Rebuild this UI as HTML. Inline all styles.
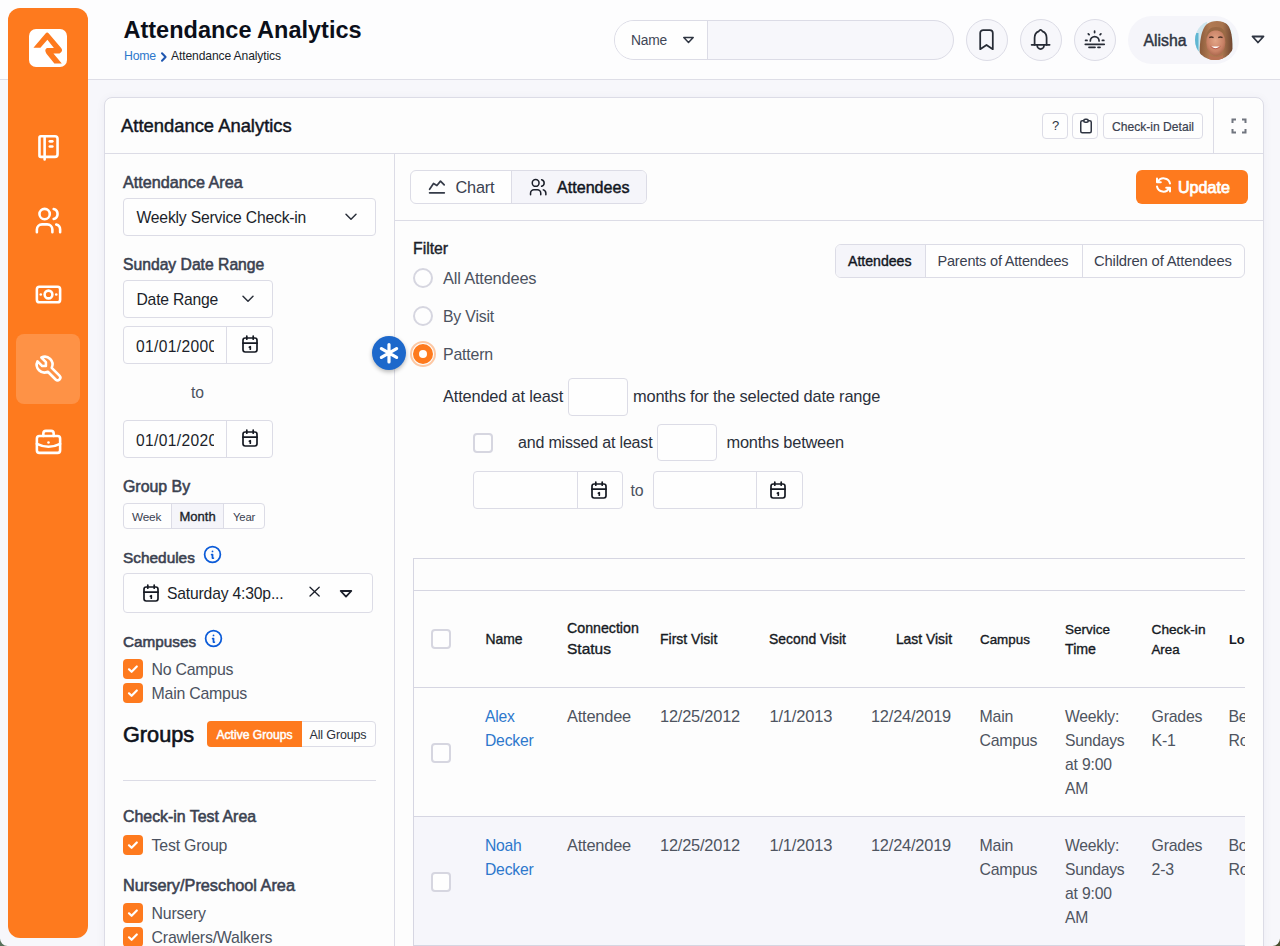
<!DOCTYPE html>
<html><head><meta charset="utf-8"><title>Attendance Analytics</title>
<style>
html,body{margin:0;padding:0;}
body{width:1280px;height:946px;overflow:hidden;position:relative;background:#f7f7fb;font-family:"Liberation Sans",sans-serif;}
.a{position:absolute;box-sizing:border-box;}
.t{white-space:nowrap;}
svg.a{overflow:visible;}
</style></head><body>
<div class="a" style="left:0px;top:0px;width:1280px;height:79px;background:#fdfdfe;"></div>
<div class="a" style="left:0px;top:79px;width:1280px;height:1px;background:#dedee7;"></div>
<div class="a" style="left:8px;top:8px;width:80px;height:930px;background:#fe7a1e;border-radius:12px;"></div>
<div class="a" style="left:29px;top:29px;width:38px;height:38px;background:#fff;border-radius:7px;"></div>
<svg class="a" style="left:26px;top:26px;" width="44" height="44" viewBox="0 0 946 946" fill="none"><path fill="#fe7a1e" d="M160 465 L420 160 Q455 118 490 160 L760 478 Q805 540 720 590 L590 590 L770 805 L610 805 L440 595 Q385 515 450 475 L600 475 L460 295 L310 465 Z"/></svg>
<div class="a" style="left:16px;top:334px;width:64px;height:70px;background:rgba(255,255,255,0.18);border-radius:8px;"></div>
<svg class="a" style="left:32.5px;top:131.2px;" width="31" height="31" viewBox="0 0 24 24" fill="none"><g stroke="#fff" stroke-width="2" stroke-linecap="round" stroke-linejoin="round"><path d="M6 4h11a2 2 0 0 1 2 2v12a2 2 0 0 1 -2 2h-11a1 1 0 0 1 -1 -1v-14a1 1 0 0 1 1 -1m3 0v18"/><path d="M13 8l2 0"/><path d="M13 12l2 0"/></g></svg>
<svg class="a" style="left:32.5px;top:205.4px;" width="31" height="31" viewBox="0 0 24 24" fill="none"><g stroke="#fff" stroke-width="2" stroke-linecap="round" stroke-linejoin="round"><path d="M9 7m-4 0a4 4 0 1 0 8 0a4 4 0 1 0 -8 0"/><path d="M3 21v-2a4 4 0 0 1 4 -4h4a4 4 0 0 1 4 4v2"/><path d="M16 3.13a4 4 0 0 1 0 7.75"/><path d="M21 21v-2a4 4 0 0 0 -3 -3.85"/></g></svg>
<svg class="a" style="left:32.5px;top:279.3px;" width="31" height="31" viewBox="0 0 24 24" fill="none"><g stroke="#fff" stroke-width="2" stroke-linecap="round" stroke-linejoin="round"><path d="M12 12m-3 0a3 3 0 1 0 6 0a3 3 0 1 0 -6 0"/><path d="M3 6m0 2a2 2 0 0 1 2 -2h14a2 2 0 0 1 2 2v8a2 2 0 0 1 -2 2h-14a2 2 0 0 1 -2 -2z"/><path d="M18 12l.01 0"/><path d="M6 12l.01 0"/></g></svg>
<svg class="a" style="left:32.5px;top:353.2px;" width="31" height="31" viewBox="0 0 24 24" fill="none"><g stroke="#fff" stroke-width="2" stroke-linecap="round" stroke-linejoin="round"><path d="M7 10h3v-3l-3.5 -3.5a6 6 0 0 1 8 8l6 6a2 2 0 0 1 -3 3l-6 -6a6 6 0 0 1 -8 -8l3.5 3.5"/></g></svg>
<svg class="a" style="left:32.5px;top:427.4px;" width="31" height="31" viewBox="0 0 24 24" fill="none"><g stroke="#fff" stroke-width="2" stroke-linecap="round" stroke-linejoin="round"><path d="M3 7m0 2a2 2 0 0 1 2 -2h14a2 2 0 0 1 2 2v9a2 2 0 0 1 -2 2h-14a2 2 0 0 1 -2 -2z"/><path d="M8 7v-2a2 2 0 0 1 2 -2h4a2 2 0 0 1 2 2v2"/><path d="M12 12l0 .01"/><path d="M3 13a20 20 0 0 0 18 0"/></g></svg>
<div class="a t" style="top:19px;font-size:23.5px;line-height:23.5px;color:#0b0f19;font-weight:700;left:123.5px;">Attendance Analytics</div>
<div class="a t" style="top:50px;font-size:12.3px;line-height:12.3px;color:#2d78cc;letter-spacing:-0.200px;left:124px;">Home</div>
<svg class="a" style="left:160px;top:51.5px;" width="8" height="10" viewBox="0 0 8 10" fill="none"><path d="M2 1.2l3.6 3.8l-3.6 3.8" stroke="#1e56b0" stroke-width="2" stroke-linecap="round" stroke-linejoin="round"/></svg>
<div class="a t" style="top:50px;font-size:12.1px;line-height:12.1px;color:#1b1f2a;letter-spacing:-0.116px;left:171px;">Attendance Analytics</div>
<div class="a" style="left:614px;top:20px;width:340px;height:40px;border:1px solid #dcdce6;border-radius:20px;background:#f7f7fb;overflow:hidden;"><div style="position:absolute;left:0;top:0;width:92px;height:38px;background:#fefefe;border-right:1px solid #dcdce6;"></div></div>
<div class="a t" style="top:34px;font-size:13.8px;line-height:13.8px;color:#3f4656;letter-spacing:-0.200px;left:631px;">Name</div>
<svg class="a" style="left:682px;top:36px;" width="13" height="8" viewBox="0 0 13 8" fill="none"><path d="M1.8 1.5h9.4l-4.7 5z" stroke="#2f3542" stroke-width="1.5" stroke-linejoin="round"/></svg>
<div class="a" style="left:966px;top:19px;width:42px;height:42px;border:1px solid #dcdce6;border-radius:50%;background:#f7f7fb;"></div>
<div class="a" style="left:1020px;top:19px;width:42px;height:42px;border:1px solid #dcdce6;border-radius:50%;background:#f7f7fb;"></div>
<div class="a" style="left:1074px;top:19px;width:42px;height:42px;border:1px solid #dcdce6;border-radius:50%;background:#f7f7fb;"></div>
<svg class="a" style="left:972px;top:24px;" width="30" height="32" viewBox="0 0 30 32" fill="none"><path d="M8.2 25.2V9.1a3 3 0 0 1 3-3h6.6a3 3 0 0 1 3 3V25.2L14.5 21z" stroke="#262b35" stroke-width="1.75" stroke-linejoin="round"/></svg>
<svg class="a" style="left:1026px;top:24px;" width="30" height="32" viewBox="0 0 30 32" fill="none"><g stroke="#262b35" stroke-width="1.75" stroke-linecap="round" stroke-linejoin="round"><path d="M5.6 20.8H23.6"/><path d="M8.6 20.8V13.8C8.6 10.4 10.3 8.3 12.7 7.4Q14.6 4.3 16.5 7.4C18.9 8.3 20.6 10.4 20.6 13.8V20.8"/><path d="M11.2 21.6a3.4 3.4 0 0 0 6.8 0"/></g></svg>
<svg class="a" style="left:1080px;top:24px;" width="30" height="32" viewBox="0 0 30 32" fill="none"><g stroke="#262b35" stroke-width="1.75" stroke-linecap="round"><path d="M5.3 20.3H24.2"/><path d="M9 23.3H15M18 23.3H20"/><path d="M10.3 16.9a4.4 4.4 0 0 1 8.8 0"/><path d="M14.6 7.2v1.4M8.3 9.9l.8.8M20.9 9.9l-.8.8M5.6 16.4h1.4M22.4 16.4h1.4"/></g></svg>
<div class="a" style="left:1128px;top:16px;width:111px;height:48px;background:#f5f5fa;border-radius:24px;"></div>
<div class="a t" style="top:33px;font-size:15.8px;line-height:15.8px;color:#2f3542;left:1143.5px;-webkit-text-stroke:0.45px #2f3542;">Alisha</div>
<svg class="a" style="left:1195px;top:20px;" width="40" height="40" viewBox="0 0 40 40" fill="none"><defs><clipPath id="av"><circle cx="20" cy="20" r="20"/></clipPath>
<radialGradient id="fg" cx="0.48" cy="0.42" r="0.6"><stop offset="0" stop-color="#e3a587"/><stop offset="0.7" stop-color="#c98266"/><stop offset="1" stop-color="#a8664c"/></radialGradient>
<linearGradient id="hg" x1="0" y1="0" x2="1" y2="0"><stop offset="0" stop-color="#8a5a3a"/><stop offset="0.3" stop-color="#b07a52"/><stop offset="0.7" stop-color="#a8744e"/><stop offset="1" stop-color="#6e4530"/></linearGradient></defs>
<g clip-path="url(#av)"><rect width="40" height="40" fill="#eef6f9"/><rect x="0" y="0" width="12" height="40" fill="#cfe6ee"/><rect x="0" y="13" width="3.5" height="18" fill="#5fb6d2"/>
<path d="M5 40 C4 28 5 10 12 4 C17 0 27 0 32 4 C38 10 38 26 37 40 Z" fill="url(#hg)"/>
<ellipse cx="20.8" cy="22.5" rx="9.6" ry="13.2" fill="url(#fg)"/>
<path d="M11 18 C11.5 10 16 7 21 7 C27 7 30.5 10 31 18 C29 12.5 25 10.5 21 10.5 C16 10.5 13 13 11 18Z" fill="#9a6a45"/>
<path d="M14.8 17.4q1.6-0.9 3.2 0M23.8 17.4q1.6-0.9 3.2 0" stroke="#4a2f25" stroke-width="1.4" fill="none" stroke-linecap="round"/>
<path d="M16 26.5q4.5 3.6 9 0z" fill="#fff"/><path d="M15.5 26.3q5 5 10 0" stroke="#b85a4f" stroke-width="0.9" fill="none"/>
<path d="M14 35 q7 4 14 0 v6 h-14z" fill="#b97255"/></g></svg>
<svg class="a" style="left:1251px;top:35px;" width="14" height="9" viewBox="0 0 14 9" fill="none"><path d="M1.5 1.5h11l-5.5 6z" stroke="#2f3542" stroke-width="1.8" stroke-linejoin="round"/></svg>
<div class="a" style="left:104px;top:97px;width:1160px;height:903px;background:#fdfdfd;border:1px solid #dcdce6;border-radius:8px;box-shadow:0 1px 10px rgba(40,40,90,0.05);"></div>
<div class="a" style="left:104px;top:153px;width:1160px;height:1px;background:#dcdce6;"></div>
<div class="a t" style="top:117px;font-size:18.4px;line-height:18.4px;color:#12161f;left:121px;-webkit-text-stroke:0.45px #12161f;">Attendance Analytics</div>
<div class="a" style="left:1042px;top:113px;width:26px;height:26px;border:1px solid #dcdce6;border-radius:4px;background:#fefefe;"></div>
<div class="a" style="left:1072px;top:113px;width:26px;height:26px;border:1px solid #dcdce6;border-radius:4px;background:#fefefe;"></div>
<div class="a" style="left:1103px;top:113px;width:100px;height:26px;border:1px solid #dcdce6;border-radius:4px;background:#fefefe;"></div>
<div class="a t" style="top:119px;font-size:13px;line-height:13px;color:#2f3542;left:1052px;">?</div>
<svg class="a" style="left:1077px;top:117px;" width="18" height="18" viewBox="0 0 24 24" fill="none"><g stroke="#2f3542" stroke-width="2" stroke-linecap="round" stroke-linejoin="round"><path d="M9 5h-2a2 2 0 0 0 -2 2v12a2 2 0 0 0 2 2h10a2 2 0 0 0 2 -2v-12a2 2 0 0 0 -2 -2h-2"/><path d="M9 3m0 2a2 2 0 0 1 2 -2h2a2 2 0 0 1 2 2v0a2 2 0 0 1 -2 2h-2a2 2 0 0 1 -2 -2z"/></g></svg>
<div class="a t" style="top:121px;font-size:12.1px;line-height:12.1px;color:#3a4150;left:1112px;-webkit-text-stroke:0.2px #3a4150;">Check-in Detail</div>
<div class="a" style="left:1213px;top:97px;width:1px;height:56px;background:#dcdce6;"></div>
<svg class="a" style="left:1231px;top:118px;" width="16" height="16" viewBox="0 0 16 16" fill="none"><path d="M1.5 5v-3.5h3.5M11 1.5h3.5v3.5M14.5 11v3.5h-3.5M5 14.5h-3.5v-3.5" stroke="#70757f" stroke-width="2"/></svg>
<div class="a" style="left:394px;top:153px;width:1px;height:847px;background:#dcdce6;"></div>
<div class="a t" style="top:174px;font-size:16.2px;line-height:16.2px;color:#3a4150;left:123px;-webkit-text-stroke:0.55px #3a4150;">Attendance Area</div>
<div class="a" style="left:123px;top:198px;width:253px;height:38px;border:1px solid #dcdce6;border-radius:4px;background:#fefefe;"></div>
<div class="a t" style="top:210px;font-size:15.7px;line-height:15.7px;color:#1b1f2a;letter-spacing:-0.193px;left:136.5px;">Weekly Service Check-in</div>
<svg class="a" style="left:345px;top:213px;" width="12" height="8" viewBox="0 0 12 8" fill="none"><path d="M1 1.2l5 5l5-5" stroke="#2b303b" stroke-width="1.5" stroke-linecap="round" stroke-linejoin="round"/></svg>
<div class="a t" style="top:257px;font-size:15.7px;line-height:15.7px;color:#3a4150;left:123px;-webkit-text-stroke:0.55px #3a4150;">Sunday Date Range</div>
<div class="a" style="left:123px;top:280px;width:150px;height:38px;border:1px solid #dcdce6;border-radius:4px;background:#fefefe;"></div>
<div class="a t" style="top:292px;font-size:15.7px;line-height:15.7px;color:#1b1f2a;letter-spacing:-0.213px;left:136.5px;">Date Range</div>
<svg class="a" style="left:242px;top:295px;" width="12" height="8" viewBox="0 0 12 8" fill="none"><path d="M1 1.2l5 5l5-5" stroke="#2b303b" stroke-width="1.5" stroke-linecap="round" stroke-linejoin="round"/></svg>
<div class="a" style="left:123px;top:326px;width:150px;height:38px;border:1px solid #dcdce6;border-radius:4px;background:#fefefe;"></div>
<div class="a" style="left:226px;top:326px;width:1px;height:38px;background:#dcdce6;"></div>
<div class="a" style="left:136px;top:334px;width:78px;height:24px;overflow:hidden;"><div class="t" style="position:absolute;left:0;top:5px;font-size:15.6px;line-height:15.6px;color:#1b1f2a;letter-spacing:0.35px;">01/01/2000</div></div>
<svg class="a" style="left:242px;top:335px;" width="16" height="18" viewBox="0 0 16 18" fill="none"><g stroke="#151922" stroke-width="1.7" stroke-linecap="round" stroke-linejoin="round"><rect x="1" y="3" width="14" height="14" rx="2.2"/><path d="M1 8.2h14M4.8 1v3.2M11.2 1v3.2M7.4 12.2l.9-.6v2.6"/></g></svg>
<div class="a" style="left:123px;top:420px;width:150px;height:38px;border:1px solid #dcdce6;border-radius:4px;background:#fefefe;"></div>
<div class="a" style="left:226px;top:420px;width:1px;height:38px;background:#dcdce6;"></div>
<div class="a" style="left:136px;top:428px;width:78px;height:24px;overflow:hidden;"><div class="t" style="position:absolute;left:0;top:5px;font-size:15.6px;line-height:15.6px;color:#1b1f2a;letter-spacing:0.35px;">01/01/2020</div></div>
<svg class="a" style="left:242px;top:429px;" width="16" height="18" viewBox="0 0 16 18" fill="none"><g stroke="#151922" stroke-width="1.7" stroke-linecap="round" stroke-linejoin="round"><rect x="1" y="3" width="14" height="14" rx="2.2"/><path d="M1 8.2h14M4.8 1v3.2M11.2 1v3.2M7.4 12.2l.9-.6v2.6"/></g></svg>
<div class="a t" style="top:385px;font-size:15.7px;line-height:15.7px;color:#4b5260;letter-spacing:-0.167px;left:191px;">to</div>
<div class="a t" style="top:479px;font-size:15.9px;line-height:15.9px;color:#3a4150;left:123px;-webkit-text-stroke:0.55px #3a4150;">Group By</div>
<div class="a" style="left:123px;top:503px;width:142px;height:26px;border:1px solid #dcdce6;border-radius:4px;background:#fefefe;"></div>
<div class="a" style="left:171px;top:504px;width:53px;height:24px;background:#f5f5fa;border-left:1px solid #dcdce6;border-right:1px solid #dcdce6;"></div>
<div class="a t" style="top:512px;font-size:11.8px;line-height:11.8px;color:#3a4150;letter-spacing:-0.190px;left:132px;">Week</div>
<div class="a t" style="top:510px;font-size:13px;line-height:13px;color:#1b1f2a;left:179.5px;-webkit-text-stroke:0.35px #1b1f2a;">Month</div>
<div class="a t" style="top:512px;font-size:11.3px;line-height:11.3px;color:#3a4150;letter-spacing:-0.152px;left:233px;">Year</div>
<div class="a t" style="top:550px;font-size:15.4px;line-height:15.4px;color:#3a4150;left:123px;-webkit-text-stroke:0.55px #3a4150;">Schedules</div>
<svg class="a" style="left:201.9px;top:543.9px;" width="21" height="21" viewBox="0 0 24 24" fill="none"><g stroke="#0b5bd8" stroke-width="2" stroke-linecap="round" stroke-linejoin="round"><path d="M3 12a9 9 0 1 0 18 0a9 9 0 0 0 -18 0"/><path d="M12 8.5h.01"/><path d="M11 12h1v4h1"/></g></svg>
<div class="a" style="left:123px;top:573px;width:250px;height:40px;border:1px solid #dcdce6;border-radius:4px;background:#fefefe;"></div>
<svg class="a" style="left:143px;top:583.5px;" width="16" height="18" viewBox="0 0 16 18" fill="none"><g stroke="#151922" stroke-width="1.7" stroke-linecap="round" stroke-linejoin="round"><rect x="1" y="3" width="14" height="14" rx="2.2"/><path d="M1 8.2h14M4.8 1v3.2M11.2 1v3.2M7.4 12.2l.9-.6v2.6"/></g></svg>
<div class="a t" style="top:586px;font-size:15.7px;line-height:15.7px;color:#1b1f2a;letter-spacing:-0.179px;left:167px;">Saturday 4:30p...</div>
<svg class="a" style="left:308px;top:586px;" width="13" height="12" viewBox="0 0 13 12" fill="none"><path d="M2 1.2l9.2 8.8M11.2 1.2l-9.2 8.8" stroke="#1b1f2a" stroke-width="1.3" stroke-linecap="round"/></svg>
<svg class="a" style="left:338px;top:588px;" width="15" height="10" viewBox="0 0 15 10" fill="none"><path d="M2.7 3h10.6l-5.3 5.6z" stroke="#1b1f2a" stroke-width="1.8" stroke-linejoin="round"/></svg>
<div class="a t" style="top:634px;font-size:15.3px;line-height:15.3px;color:#3a4150;left:123px;-webkit-text-stroke:0.55px #3a4150;">Campuses</div>
<svg class="a" style="left:202.9px;top:628.4px;" width="21" height="21" viewBox="0 0 24 24" fill="none"><g stroke="#0b5bd8" stroke-width="2" stroke-linecap="round" stroke-linejoin="round"><path d="M3 12a9 9 0 1 0 18 0a9 9 0 0 0 -18 0"/><path d="M12 8.5h.01"/><path d="M11 12h1v4h1"/></g></svg>
<div class="a" style="left:123px;top:659px;width:20px;height:20px;background:#fe7a1e;border-radius:4px;"></div>
<svg class="a" style="left:123px;top:659px;" width="20" height="20" viewBox="0 0 20 20" fill="none"><path d="M6 10.3l2.6 2.5l5.2-5.3" stroke="#fff" stroke-width="2.2" stroke-linecap="round" stroke-linejoin="round"/></svg>
<div class="a t" style="top:662px;font-size:15.9px;line-height:15.9px;color:#4b5260;letter-spacing:-0.235px;left:151.5px;">No Campus</div>
<div class="a" style="left:123px;top:683px;width:20px;height:20px;background:#fe7a1e;border-radius:4px;"></div>
<svg class="a" style="left:123px;top:683px;" width="20" height="20" viewBox="0 0 20 20" fill="none"><path d="M6 10.3l2.6 2.5l5.2-5.3" stroke="#fff" stroke-width="2.2" stroke-linecap="round" stroke-linejoin="round"/></svg>
<div class="a t" style="top:686px;font-size:15.9px;line-height:15.9px;color:#4b5260;letter-spacing:-0.224px;left:151.5px;">Main Campus</div>
<div class="a t" style="top:724px;font-size:21.7px;line-height:21.7px;color:#0f131b;left:123px;-webkit-text-stroke:0.6px #0f131b;">Groups</div>
<div class="a" style="left:207px;top:721px;width:169px;height:26px;border:1px solid #dcdce6;border-radius:4px;background:#fefefe;"></div>
<div class="a" style="left:207px;top:721px;width:95px;height:26px;background:#fe7a1e;border-radius:4px 0 0 4px;"></div>
<div class="a t" style="top:729px;font-size:12.1px;line-height:12.1px;color:#fff;left:216.5px;-webkit-text-stroke:0.5px #fff;">Active Groups</div>
<div class="a t" style="top:729px;font-size:12.5px;line-height:12.5px;color:#2b303b;letter-spacing:-0.140px;left:309.5px;">All Groups</div>
<div class="a" style="left:123px;top:780px;width:253px;height:1px;background:#dcdce6;"></div>
<div class="a t" style="top:809px;font-size:15.9px;line-height:15.9px;color:#3a4150;left:123px;-webkit-text-stroke:0.55px #3a4150;">Check-in Test Area</div>
<div class="a" style="left:123px;top:835px;width:20px;height:20px;background:#fe7a1e;border-radius:4px;"></div>
<svg class="a" style="left:123px;top:835px;" width="20" height="20" viewBox="0 0 20 20" fill="none"><path d="M6 10.3l2.6 2.5l5.2-5.3" stroke="#fff" stroke-width="2.2" stroke-linecap="round" stroke-linejoin="round"/></svg>
<div class="a t" style="top:838px;font-size:15.9px;line-height:15.9px;color:#4b5260;letter-spacing:-0.196px;left:151.5px;">Test Group</div>
<div class="a t" style="top:877px;font-size:16.3px;line-height:16.3px;color:#3a4150;left:123px;-webkit-text-stroke:0.55px #3a4150;">Nursery/Preschool Area</div>
<div class="a" style="left:123px;top:903px;width:20px;height:20px;background:#fe7a1e;border-radius:4px;"></div>
<svg class="a" style="left:123px;top:903px;" width="20" height="20" viewBox="0 0 20 20" fill="none"><path d="M6 10.3l2.6 2.5l5.2-5.3" stroke="#fff" stroke-width="2.2" stroke-linecap="round" stroke-linejoin="round"/></svg>
<div class="a t" style="top:906px;font-size:15.9px;line-height:15.9px;color:#4b5260;letter-spacing:-0.200px;left:151.5px;">Nursery</div>
<div class="a" style="left:123px;top:927px;width:20px;height:20px;background:#fe7a1e;border-radius:4px;"></div>
<svg class="a" style="left:123px;top:927px;" width="20" height="20" viewBox="0 0 20 20" fill="none"><path d="M6 10.3l2.6 2.5l5.2-5.3" stroke="#fff" stroke-width="2.2" stroke-linecap="round" stroke-linejoin="round"/></svg>
<div class="a t" style="top:930px;font-size:15.9px;line-height:15.9px;color:#4b5260;letter-spacing:-0.195px;left:151.5px;">Crawlers/Walkers</div>
<div class="a" style="left:410px;top:170px;width:237px;height:34px;border:1px solid #dcdce6;border-radius:6px;background:#fefefe;overflow:hidden;"><div style="position:absolute;left:100px;top:0;width:136px;height:32px;background:#f5f5fa;border-left:1px solid #dcdce6;"></div></div>
<svg class="a" style="left:427px;top:179px;" width="20" height="17" viewBox="0 0 20 17" fill="none"><g stroke="#353b48" stroke-width="1.7" stroke-linecap="round" stroke-linejoin="round"><path d="M2.6 13.8h14.7"/><path d="M2.6 10.3l3.9-5.8l3.4 2l3.6-4.4l3.7 3.8"/></g></svg>
<div class="a t" style="top:179px;font-size:16.3px;line-height:16.3px;color:#3a4150;letter-spacing:-0.196px;left:455.5px;">Chart</div>
<svg class="a" style="left:528px;top:177px;" width="21" height="20" viewBox="0 0 21 20" fill="none"><g stroke="#1b1f2a" stroke-width="1.8" stroke-linecap="round" stroke-linejoin="round" transform="scale(0.85)"><path d="M9 7m-4 0a4 4 0 1 0 8 0a4 4 0 1 0 -8 0"/><path d="M3 21v-2a4 4 0 0 1 4 -4h4a4 4 0 0 1 4 4v2"/><path d="M16 3.13a4 4 0 0 1 0 7.75"/><path d="M21 21v-2a4 4 0 0 0 -3 -3.85"/></g></svg>
<div class="a t" style="top:179px;font-size:16.1px;line-height:16.1px;color:#12161f;left:557px;-webkit-text-stroke:0.45px #12161f;">Attendees</div>
<div class="a" style="left:1136px;top:170px;width:112px;height:34px;background:#fe7a1e;border-radius:6px;"></div>
<svg class="a" style="left:1154px;top:176px;" width="19" height="18" viewBox="0 0 19 18" fill="none"><g stroke="#fff" stroke-width="2" stroke-linecap="round" stroke-linejoin="round"><path d="M16 7.5a6.5 6.5 0 0 0-12.2-1.5M3 2.5v3.8h3.8"/><path d="M3 10.5a6.5 6.5 0 0 0 12.2 1.5M16 15.5v-3.8h-3.8"/></g></svg>
<div class="a t" style="top:179px;font-size:16.1px;line-height:16.1px;color:#fff;left:1178px;-webkit-text-stroke:0.75px #fff;">Update</div>
<div class="a" style="left:395px;top:220px;width:869px;height:1px;background:#dcdce6;"></div>
<div class="a t" style="top:241px;font-size:15.8px;line-height:15.8px;color:#1b1f2a;left:413px;-webkit-text-stroke:0.4px #1b1f2a;">Filter</div>
<div class="a" style="left:413px;top:268px;width:20px;height:20px;border:2px solid #d6d6e0;border-radius:50%;background:#fefefe;"></div>
<div class="a" style="left:413px;top:306px;width:20px;height:20px;border:2px solid #d6d6e0;border-radius:50%;background:#fefefe;"></div>
<div class="a" style="left:410px;top:341px;width:26px;height:26px;border:2px solid #fdc8a4;border-radius:50%;"></div>
<div class="a" style="left:413px;top:344px;width:20px;height:20px;background:#fe7a1e;border-radius:50%;"></div>
<div class="a" style="left:419px;top:350px;width:8px;height:8px;background:#fff;border-radius:50%;"></div>
<div class="a t" style="top:270px;font-size:16.4px;line-height:16.4px;color:#4b5260;letter-spacing:-0.180px;left:443px;">All Attendees</div>
<div class="a t" style="top:309px;font-size:15.8px;line-height:15.8px;color:#4b5260;letter-spacing:-0.166px;left:443px;">By Visit</div>
<div class="a t" style="top:347px;font-size:15.9px;line-height:15.9px;color:#4b5260;letter-spacing:-0.184px;left:443px;">Pattern</div>
<div class="a" style="left:372px;top:336px;width:34px;height:34px;background:#1d68cb;border-radius:50%;box-shadow:0 2px 4px rgba(0,0,0,0.28);"></div>
<svg class="a" style="left:372px;top:336px;" width="34" height="34" viewBox="0 0 34 34" fill="none"><g stroke="#fff" stroke-width="3.2" stroke-linecap="round"><path d="M17 8.5v17.5M9.4 12.6l15.2 8.8M24.6 12.6l-15.2 8.8"/></g></svg>
<div class="a" style="left:835px;top:244px;width:410px;height:34px;border:1px solid #dcdce6;border-radius:6px;background:#fefefe;overflow:hidden;"><div style="position:absolute;left:0;top:0;width:89px;height:32px;background:#f5f5fa;border-right:1px solid #dcdce6;"></div><div style="position:absolute;left:246px;top:0;width:1px;height:32px;background:#dcdce6;"></div></div>
<div class="a t" style="top:254px;font-size:14.1px;line-height:14.1px;color:#12161f;left:848px;-webkit-text-stroke:0.4px #12161f;">Attendees</div>
<div class="a t" style="top:254px;font-size:14.5px;line-height:14.5px;color:#3a4150;letter-spacing:-0.186px;left:937.5px;">Parents of Attendees</div>
<div class="a t" style="top:254px;font-size:14.8px;line-height:14.8px;color:#3a4150;letter-spacing:-0.182px;left:1094px;">Children of Attendees</div>
<div class="a t" style="top:388px;font-size:16.4px;line-height:16.4px;color:#2b303b;letter-spacing:-0.177px;left:443px;">Attended at least</div>
<div class="a" style="left:568px;top:378px;width:60px;height:38px;border:1px solid #dcdce6;border-radius:4px;background:#fefefe;"></div>
<div class="a t" style="top:388px;font-size:16.4px;line-height:16.4px;color:#2b303b;letter-spacing:-0.182px;left:633px;">months for the selected date range</div>
<div class="a" style="left:473px;top:433px;width:20px;height:20px;border:2px solid #d6d6e0;border-radius:4px;background:#fefefe;"></div>
<div class="a t" style="top:435px;font-size:16px;line-height:16px;color:#2b303b;letter-spacing:-0.181px;left:518px;">and missed at least</div>
<div class="a" style="left:657px;top:424px;width:60px;height:37px;border:1px solid #dcdce6;border-radius:4px;background:#fefefe;"></div>
<div class="a t" style="top:434px;font-size:16.4px;line-height:16.4px;color:#2b303b;letter-spacing:-0.210px;left:726.5px;">months between</div>
<div class="a" style="left:473px;top:471px;width:150px;height:38px;border:1px solid #dcdce6;border-radius:4px;background:#fefefe;"></div>
<div class="a" style="left:577px;top:471px;width:1px;height:38px;background:#dcdce6;"></div>
<svg class="a" style="left:591px;top:480.5px;" width="16" height="18" viewBox="0 0 16 18" fill="none"><g stroke="#151922" stroke-width="1.7" stroke-linecap="round" stroke-linejoin="round"><rect x="1" y="3" width="14" height="14" rx="2.2"/><path d="M1 8.2h14M4.8 1v3.2M11.2 1v3.2M7.4 12.2l.9-.6v2.6"/></g></svg>
<div class="a" style="left:653px;top:471px;width:150px;height:38px;border:1px solid #dcdce6;border-radius:4px;background:#fefefe;"></div>
<div class="a" style="left:756px;top:471px;width:1px;height:38px;background:#dcdce6;"></div>
<svg class="a" style="left:770px;top:480.5px;" width="16" height="18" viewBox="0 0 16 18" fill="none"><g stroke="#151922" stroke-width="1.7" stroke-linecap="round" stroke-linejoin="round"><rect x="1" y="3" width="14" height="14" rx="2.2"/><path d="M1 8.2h14M4.8 1v3.2M11.2 1v3.2M7.4 12.2l.9-.6v2.6"/></g></svg>
<div class="a t" style="top:483px;font-size:15.9px;line-height:15.9px;color:#4b5260;letter-spacing:-0.167px;left:630.5px;">to</div>
<div class="a" style="left:413px;top:558px;width:832px;height:400px;overflow:hidden;">
<div class="a" style="left:0px;top:0px;width:900px;height:1px;background:#d6d6e2;"></div>
<div class="a" style="left:0px;top:0px;width:1px;height:400px;background:#d6d6e2;"></div>
<div class="a" style="left:0px;top:32px;width:900px;height:1px;background:#d6d6e2;"></div>
<div class="a" style="left:0px;top:129px;width:900px;height:1px;background:#d6d6e2;"></div>
<div class="a" style="left:1px;top:258px;width:899px;height:129px;background:#f6f6fb;"></div>
<div class="a" style="left:0px;top:257.5px;width:900px;height:1px;background:#d6d6e2;"></div>
<div class="a" style="left:0px;top:387px;width:900px;height:1px;background:#d6d6e2;"></div>
</div>
<div class="a" style="left:431px;top:629px;width:20px;height:20px;border:2px solid #d6d6e0;border-radius:4px;background:#fefefe;"></div>
<div class="a t" style="top:633px;font-size:13.9px;line-height:13.9px;color:#161a23;left:485.5px;-webkit-text-stroke:0.35px #161a23;">Name</div>
<div class="a t" style="top:621px;font-size:14.2px;line-height:14.2px;color:#161a23;left:567px;-webkit-text-stroke:0.35px #161a23;">Connection</div>
<div class="a t" style="top:641px;font-size:15.5px;line-height:15.5px;color:#161a23;left:567px;-webkit-text-stroke:0.35px #161a23;">Status</div>
<div class="a t" style="top:632px;font-size:14px;line-height:14px;color:#161a23;left:660px;-webkit-text-stroke:0.35px #161a23;">First Visit</div>
<div class="a t" style="top:633px;font-size:13.9px;line-height:13.9px;color:#161a23;left:769px;-webkit-text-stroke:0.35px #161a23;">Second Visit</div>
<div class="a t" style="top:633px;font-size:13.9px;line-height:13.9px;color:#161a23;right:328px;-webkit-text-stroke:0.35px #161a23;">Last Visit</div>
<div class="a t" style="top:633px;font-size:13.4px;line-height:13.4px;color:#161a23;left:980px;-webkit-text-stroke:0.35px #161a23;">Campus</div>
<div class="a t" style="top:623px;font-size:13.5px;line-height:13.5px;color:#161a23;left:1065px;-webkit-text-stroke:0.35px #161a23;">Service</div>
<div class="a t" style="top:642px;font-size:14.2px;line-height:14.2px;color:#161a23;left:1065px;-webkit-text-stroke:0.35px #161a23;">Time</div>
<div class="a t" style="top:623px;font-size:13.7px;line-height:13.7px;color:#161a23;left:1151.5px;-webkit-text-stroke:0.35px #161a23;">Check-in</div>
<div class="a t" style="top:643px;font-size:13.3px;line-height:13.3px;color:#161a23;left:1151.5px;-webkit-text-stroke:0.35px #161a23;">Area</div>
<div class="a" style="left:1229px;top:620px;width:16px;height:40px;overflow:hidden;">
<div class="a t" style="top:14px;font-size:12.8px;line-height:12.8px;color:#161a23;font-weight:700;left:0px;">Location</div>
</div>
<div class="a" style="left:431px;top:742.5px;width:20px;height:20px;border:2px solid #d6d6e0;border-radius:4px;background:#fefefe;"></div>
<div class="a t" style="top:709px;font-size:15.7px;line-height:15.7px;color:#2d78cc;letter-spacing:-0.195px;left:485px;">Alex</div>
<div class="a t" style="top:733px;font-size:15.7px;line-height:15.7px;color:#2d78cc;letter-spacing:-0.211px;left:485px;">Decker</div>
<div class="a t" style="top:708px;font-size:16.4px;line-height:16.4px;color:#4e5460;letter-spacing:-0.200px;left:567px;">Attendee</div>
<div class="a t" style="top:708px;font-size:16.4px;line-height:16.4px;color:#4e5460;letter-spacing:-0.200px;left:660px;">12/25/2012</div>
<div class="a t" style="top:708px;font-size:16.5px;line-height:16.5px;color:#4e5460;letter-spacing:-0.195px;left:769.5px;">1/1/2013</div>
<div class="a t" style="top:708px;font-size:16.4px;line-height:16.4px;color:#4e5460;letter-spacing:-0.200px;right:329px;">12/24/2019</div>
<div class="a t" style="top:709px;font-size:15.9px;line-height:15.9px;color:#4e5460;letter-spacing:-0.217px;left:979.5px;">Main</div>
<div class="a t" style="top:733px;font-size:15.9px;line-height:15.9px;color:#4e5460;letter-spacing:-0.248px;left:979.5px;">Campus</div>
<div class="a t" style="top:709px;font-size:15.7px;line-height:15.7px;color:#4e5460;letter-spacing:-0.202px;left:1065px;">Weekly:</div>
<div class="a t" style="top:733px;font-size:15.7px;line-height:15.7px;color:#4e5460;letter-spacing:-0.222px;left:1065px;">Sundays</div>
<div class="a t" style="top:757px;font-size:15.7px;line-height:15.7px;color:#4e5460;letter-spacing:-0.175px;left:1065px;">at 9:00</div>
<div class="a t" style="top:781px;font-size:15.7px;line-height:15.7px;color:#4e5460;letter-spacing:-0.300px;left:1065px;">AM</div>
<div class="a t" style="top:709px;font-size:15.9px;line-height:15.9px;color:#4e5460;letter-spacing:-0.219px;left:1151.5px;">Grades</div>
<div class="a t" style="top:733px;font-size:15.9px;line-height:15.9px;color:#4e5460;letter-spacing:-0.207px;left:1151.5px;">K-1</div>
<div class="a" style="left:1228px;top:700px;width:17px;height:60px;overflow:hidden;">
<div class="a t" style="top:9px;font-size:15.9px;line-height:15.9px;color:#4e5460;letter-spacing:-0.232px;left:0.5px;">Bedroom</div>
<div class="a t" style="top:33px;font-size:15.9px;line-height:15.9px;color:#4e5460;letter-spacing:-0.267px;left:0.5px;">Room</div>
</div>
<div class="a" style="left:431px;top:871.5px;width:20px;height:20px;border:2px solid #d6d6e0;border-radius:4px;background:#fefefe;"></div>
<div class="a t" style="top:838px;font-size:15.7px;line-height:15.7px;color:#2d78cc;letter-spacing:-0.239px;left:485px;">Noah</div>
<div class="a t" style="top:862px;font-size:15.7px;line-height:15.7px;color:#2d78cc;letter-spacing:-0.211px;left:485px;">Decker</div>
<div class="a t" style="top:837px;font-size:16.4px;line-height:16.4px;color:#4e5460;letter-spacing:-0.200px;left:567px;">Attendee</div>
<div class="a t" style="top:837px;font-size:16.4px;line-height:16.4px;color:#4e5460;letter-spacing:-0.200px;left:660px;">12/25/2012</div>
<div class="a t" style="top:837px;font-size:16.5px;line-height:16.5px;color:#4e5460;letter-spacing:-0.195px;left:769.5px;">1/1/2013</div>
<div class="a t" style="top:837px;font-size:16.4px;line-height:16.4px;color:#4e5460;letter-spacing:-0.200px;right:329px;">12/24/2019</div>
<div class="a t" style="top:838px;font-size:15.9px;line-height:15.9px;color:#4e5460;letter-spacing:-0.217px;left:979.5px;">Main</div>
<div class="a t" style="top:862px;font-size:15.9px;line-height:15.9px;color:#4e5460;letter-spacing:-0.248px;left:979.5px;">Campus</div>
<div class="a t" style="top:838px;font-size:15.7px;line-height:15.7px;color:#4e5460;letter-spacing:-0.202px;left:1065px;">Weekly:</div>
<div class="a t" style="top:862px;font-size:15.7px;line-height:15.7px;color:#4e5460;letter-spacing:-0.222px;left:1065px;">Sundays</div>
<div class="a t" style="top:886px;font-size:15.7px;line-height:15.7px;color:#4e5460;letter-spacing:-0.175px;left:1065px;">at 9:00</div>
<div class="a t" style="top:910px;font-size:15.7px;line-height:15.7px;color:#4e5460;letter-spacing:-0.300px;left:1065px;">AM</div>
<div class="a t" style="top:838px;font-size:15.9px;line-height:15.9px;color:#4e5460;letter-spacing:-0.219px;left:1151.5px;">Grades</div>
<div class="a t" style="top:862px;font-size:15.9px;line-height:15.9px;color:#4e5460;letter-spacing:-0.193px;left:1151.5px;">2-3</div>
<div class="a" style="left:1228px;top:829px;width:17px;height:60px;overflow:hidden;">
<div class="a t" style="top:9px;font-size:15.9px;line-height:15.9px;color:#4e5460;letter-spacing:-0.232px;left:0.5px;">Bodroom</div>
<div class="a t" style="top:33px;font-size:15.9px;line-height:15.9px;color:#4e5460;letter-spacing:-0.267px;left:0.5px;">Room</div>
</div>
<svg class="a" style="left:0px;top:936px;" width="10" height="10" viewBox="0 0 10 10" fill="none"><path d="M0 2.5A7.5 7.5 0 0 0 7.5 10H0Z" fill="#56705a"/></svg>
<svg class="a" style="left:1270px;top:936px;" width="10" height="10" viewBox="0 0 10 10" fill="none"><path d="M10 2.5A7.5 7.5 0 0 1 2.5 10H10Z" fill="#4a4f2e"/></svg>
</body></html>
